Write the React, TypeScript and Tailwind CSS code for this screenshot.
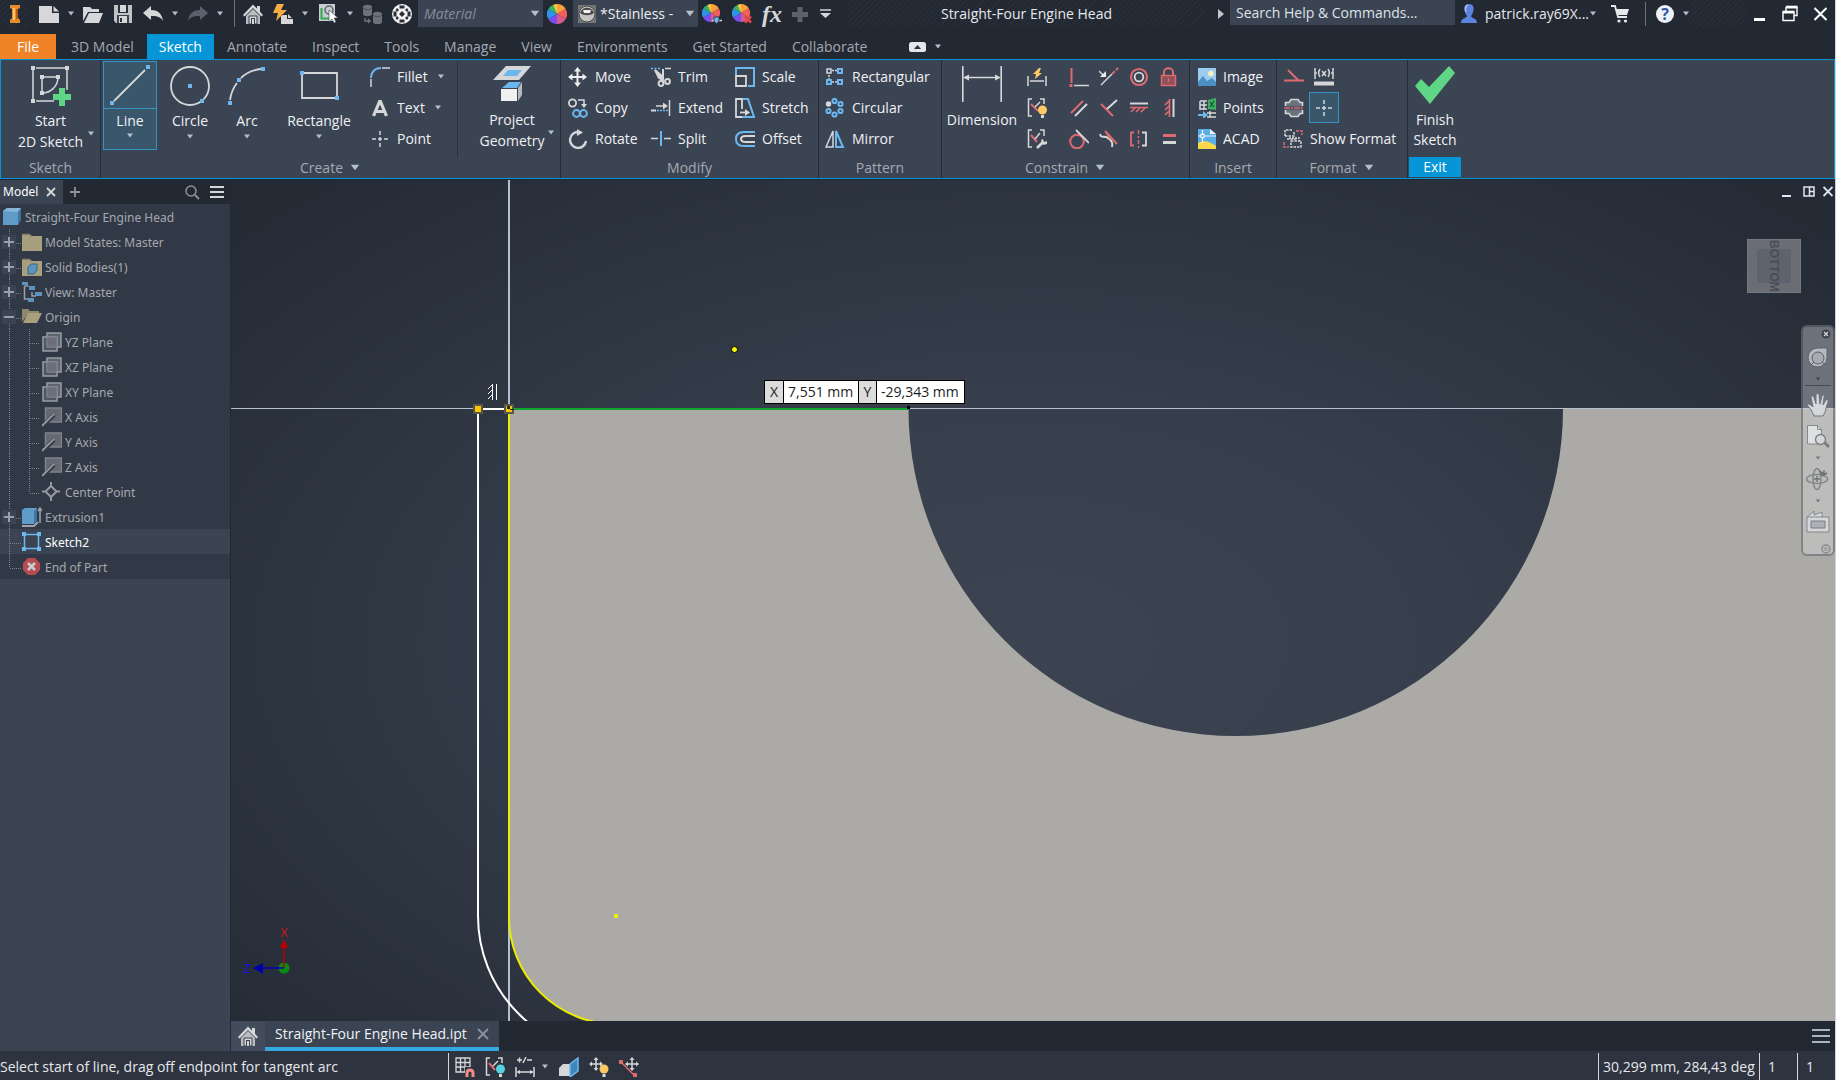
import React from 'react';

const L = '#d6d7d9';
const B = '#6cb8ee';
const R = '#de6a70';
const Y = '#fdc966';
const G = '#5fd685';

interface SvgProps {
  w?: number;
  h?: number;
  children: React.ReactNode;
}

const Svg: React.FC<SvgProps> = ({ w = 20, h = 20, children }) => (
  <svg width={w} height={h} viewBox={`0 0 ${w} ${h}`} fill="none" stroke={L} strokeWidth={1.5} className="shrink-0" aria-hidden="true">
    {children}
  </svg>
);

const Caret = ({ color = '#b4bfcc', w = 8 }: { color?: string; w?: number }) => (
  <svg width={w} height={w / 2 + 1} viewBox="0 0 8 5" className="shrink-0" aria-hidden="true">
    <path d="M1 0.5h6L4 4.5z" fill={color} />
  </svg>
);

const CaretButton = ({ label }: { label: string }) => (
  <button aria-label={label} className="ml-2 flex h-5 w-2 items-center justify-center">
    <Caret />
  </button>
);

/* ---------- title bar icons ---------- */

const InventorLogo = () => (
  <Svg w={12} h={20}>
    <path d="M1 1h10v3l-2 1v9l2 2v3H1v-3l2-2V5L1 4z" fill="#e98b2a" stroke="none" />
    <path d="M4 4h2v12H4z" fill="#f7c271" stroke="none" />
    <path d="M7 5h2v9l-2 2z" fill="#b05d10" stroke="none" />
  </Svg>
);

const NewIcon = () => (
  <Svg>
    <path d="M0 2h13v7h7v10H0z" fill={L} stroke="none" />
    <path d="M14.500 2L20 7.500h-5.500z" fill={L} stroke="none" />
  </Svg>
);

const OpenIcon = () => (
  <Svg>
    <path d="M0 17V3h7l2 2h7v3H5z" fill={L} stroke="none" />
    <path d="M6 9h14l-4 10H1z" fill={L} stroke="none" />
  </Svg>
);

const SaveIcon = () => (
  <Svg>
    <path d="M1 1h18v18H3l-2-2z" fill="#bfc2c6" stroke="none" />
    <path d="M5 1h10v8H5z" fill="#2a313c" stroke="none" />
    <path d="M7 1h6v7H7z" fill={L} stroke="none" />
    <path d="M4 11h12v8H4z" fill="#3d444f" stroke="none" />
    <path d="M6 12h8v7H6z" fill={L} stroke="none" />
    <path d="M7 14h2v4H7z" fill="#2a313c" stroke="none" />
  </Svg>
);

const UndoIcon = () => (
  <Svg>
    <path d="M0 9l8-7v4c6 0 11 3 12 11-3-5-7-5-12-5v4z" fill={L} stroke="none" />
  </Svg>
);

const RedoIcon = () => (
  <Svg>
    <path d="M20 9l-8-7v4C6 6 1 9 0 17c3-5 7-5 12-5v4z" fill="#5a616c" stroke="none" />
  </Svg>
);

const HomeIcon = () => (
  <Svg>
    <path d="M14 2h3v6h-3zM10 0.500L20 11l-1.500 1.500L10 4l-8.500 8.500L0 11z" fill={L} stroke="none" />
    <path d="M3 12l7-7 7 7v8H3z" fill="#b9bcc0" stroke="none" />
    <path d="M6 12h8v8H6z" fill={L} stroke="#39404c" strokeWidth={1} />
    <path d="M8 14h4v6H8z" fill="#39404c" stroke="none" />
    <path d="M9 15h2v5H9z" fill={L} stroke="none" />
  </Svg>
);

const BoltDocIcon = () => (
  <Svg>
    <path d="M4 0h7L8 6h6L3 17l2-8H0z" fill="#f8ac45" stroke="none" />
    <path d="M8 12l2-1h4v4h6v5H8z" fill={L} stroke="none" />
    <path d="M15 10l4 4h-4z" fill={L} stroke="none" />
  </Svg>
);

const PickIcon = () => (
  <Svg>
    <path d="M1 0h16v17H1z" fill="#c9ccd0" stroke="none" />
    <path d="M3.500 4v10.500h9" stroke="#2fa84f" strokeWidth={2} />
    <circle cx="11" cy="6" r="4" stroke="#5d646e" />
    <path d="M11 6l9 8h-4l2 4-2 1-2-4-3 3z" fill="#fff" stroke="#39404c" strokeWidth={0.6} />
  </Svg>
);

const CylindersIcon = () => (
  <Svg>
    <path d="M1 3c0-3 9-3 9 0v7c0 3-9 3-9 0z" fill="#6c727c" stroke="none" />
    <path d="M11 10c0-3 9-3 9 0v8c0 3-9 3-9 0z" fill="#6c727c" stroke="none" />
    <path d="M1 4c1 2 8 2 9 0M11 11c1 2 8 2 9 0" stroke="#4a515c" strokeWidth={1} />
    <path d="M3 14v3h5M6 15l2 2-2 2" stroke="#6c727c" />
  </Svg>
);

const BallIcon = () => (
  <Svg>
    <circle cx="10" cy="10" r="10" fill="#f3f3f3" stroke="none" />
    <g fill="#2a2f38" stroke="none">
      <path d="M7.500 1.500h5v3h-5zM7.500 15.500h5v3h-5zM1.500 7.500h3v5h-3zM15.500 7.500h3v5h-3z" />
      <path d="M10 7l3 3-3 3-3-3zM5 4l2 2-2 2-1.500-2zM15 4l-2 2 2 2 1.500-2zM5 16l2-2-2-2-1.500 2zM15 16l-2-2 2-2 1.500 2z" />
    </g>
  </Svg>
);

const wheelSlices = [
  ['M10 10V0A10 10 0 0 1 18.700 5z', '#f9a13a'],
  ['M10 10L18.700 5A10 10 0 0 1 18.700 15z', '#f2605b'],
  ['M10 10L18.700 15A10 10 0 0 1 10 20z', '#d65a8c'],
  ['M10 10V20A10 10 0 0 1 1.300 15z', '#7b4df0'],
  ['M10 10L1.300 15A10 10 0 0 1 1.300 5z', '#2d95e8'],
  ['M10 10L1.300 5A10 10 0 0 1 6 1z', '#35b56c'],
  ['M10 10L6 1A10 10 0 0 1 10 0z', '#f3cb3f'],
];

const WheelIcon = ({ mark }: { mark?: 'adjust' | 'clear' }) => (
  <Svg>
    <g stroke="none" transform={mark ? 'scale(0.9)' : undefined}>
      {wheelSlices.map(([d, fill]) => (
        <path key={d} d={d} fill={fill} />
      ))}
    </g>
    {mark === 'adjust' && (
      <>
        <path d="M10 16.500h10" />
        <path d="M12 13h5v4l-2.500 3-2.500-3z" fill={B} stroke="#222933" strokeWidth={0.800} />
      </>
    )}
    {mark === 'clear' && <path d="M13 12.500l6 6M19 12.500l-6 6" stroke="#e0474b" strokeWidth={2.600} />}
  </Svg>
);

const SteelBallIcon = () => (
  <Svg w={18} h={18}>
    <path d="M0 0h18v18H0z" fill="#757575" stroke="none" />
    <circle cx="9" cy="9" r="8" fill="#c4c4c4" stroke="#4a4a4a" strokeWidth={1} />
    <path d="M2 8c2-7 12-7 14 0-4 3-10 3-14 0z" fill="#4b4b4b" stroke="none" />
    <path d="M5 5h8l-1 3H6z" fill="#f2f2f2" stroke="none" />
  </Svg>
);

const UserIcon = () => (
  <Svg w={18} h={20}>
    <path d="M9 0c4 0 5 3 4.500 6S12 11 11 12c0 2 6 2 6 7H1c0-5 6-5 6-7-1-1-2-3-2.500-6S5 0 9 0z" fill="#5c83dd" stroke="none" />
    <path d="M8 1c-3 1-3 4-2 7" stroke="#a9c0f7" />
  </Svg>
);

const CartIcon = () => (
  <Svg w={18}>
    <path d="M0 2h4l3 11h9" stroke="#e6e8ec" strokeWidth={1.800} />
    <path d="M5 5h13l-2 6H6.500z" fill="#e6e8ec" stroke="none" />
    <circle cx="8" cy="17" r="1.600" fill="#e6e8ec" stroke="none" />
    <circle cx="14.500" cy="17" r="1.600" fill="#e6e8ec" stroke="none" />
  </Svg>
);

/* ---------- ribbon icons ---------- */

const Dot = ({ x, y, c = B }: { x: number; y: number; c?: string }) => (
  <rect x={x - 2} y={y - 2} width={4} height={4} fill={c} stroke="none" />
);

const StartSketchIcon = () => (
  <Svg w={40} h={42}>
    <path d="M5 3h26M36 5v20M2 8v26M5 36h18M2 3v33M31 3h5v4" strokeWidth={1.500} />
    <path d="M11 12h16M11 12v16M27 12c0 9-7 16-16 16" />
    <Dot x={2} y={3} c={L} />
    <Dot x={36} y={3} c={L} />
    <Dot x={2} y={36} c={L} />
    <Dot x={11} y={12} c={L} />
    <Dot x={27} y={12} c={L} />
    <Dot x={11} y={28} c={L} />
    <path d="M28 23h6v6h6v6h-6v6h-6v-6h-6v-6h6z" fill={G} stroke="none" />
  </Svg>
);

const LineIcon = () => (
  <Svg w={40} h={40}>
    <path d="M4 36L35 5" strokeWidth={1.800} />
    <Dot x={2} y={38} />
    <Dot x={38} y={2} />
  </Svg>
);

const CircleIcon = () => (
  <Svg w={40} h={40}>
    <circle cx="20" cy="20" r="19" strokeWidth={1.800} />
    <Dot x={20} y={20} />
    <Dot x={32} y={35} />
  </Svg>
);

const ArcIcon = () => (
  <Svg w={40} h={40}>
    <path d="M3 34C4 27 6 22 10 17M14 12C19 7 26 4 34 3" strokeWidth={1.800} />
    <Dot x={3} y={37} />
    <Dot x={12} y={14} />
    <Dot x={36} y={3} />
  </Svg>
);

const RectIcon = () => (
  <Svg w={40} h={40}>
    <path d="M3 7h35v25H3z" strokeWidth={1.800} />
    <Dot x={3} y={7} />
    <Dot x={38} y={32} />
  </Svg>
);

const FilletIcon = () => (
  <Svg>
    <path d="M1 11C1 5 5 1 11 1" stroke={B} strokeWidth={1.800} />
    <path d="M12 1h8M1 12v8" />
  </Svg>
);

const TextIcon = () => (
  <Svg>
    <path d="M10 2.500L3.500 18M10 2.500L16.500 18M5.500 13.500h9" strokeWidth={3.200} />
  </Svg>
);

const PointIcon = () => (
  <Svg>
    <path d="M10 2v4M10 14v4M2 10h4M14 10h4M8 10h4M10 8v4" />
  </Svg>
);

const ProjectIcon = () => (
  <Svg w={38} h={36}>
    <path d="M13 0h25L26 14H0z" fill={L} stroke="none" />
    <path d="M15 4h14l-5 6H10z" fill={B} stroke="none" />
    <path d="M9 22l7-6h12l-4 6z" fill={B} stroke="none" />
    <path d="M8 23h16v12H8z" fill="#f0f0f0" stroke="none" />
    <path d="M25 22l4-6v13l-4 6z" fill="#b5b8bd" stroke="none" />
  </Svg>
);

const MoveIcon = () => (
  <Svg>
    <path d="M9.500 3v14M3 10h13" strokeWidth={2} stroke="#eee" />
    <path d="M9.500 0l3.500 4.500H6zM9.500 20L13 15.500H6zM0 10l4.500-3.500v7zM19 10l-4.500-3.500v7z" fill="#eee" stroke="none" />
  </Svg>
);

const CopyIcon = () => (
  <Svg>
    <circle cx="4.500" cy="5" r="3.600" strokeWidth={1.800} />
    <path d="M10 2h6v5" />
    <path d="M13 6h6l-3 4z" fill={L} stroke="none" />
    <circle cx="8.500" cy="15.500" r="3.400" stroke={B} strokeWidth={2} />
    <circle cx="15.500" cy="15.500" r="3.400" stroke={B} strokeWidth={2} />
  </Svg>
);

const RotateIcon = () => (
  <Svg>
    <path d="M11 3a8 8 0 1 0 7 9" strokeWidth={2.400} />
    <path d="M9 0l6 3.500L9 7z" fill={L} stroke="none" />
  </Svg>
);

const TrimIcon = () => (
  <Svg>
    <path d="M0 1.500h9" stroke={B} strokeDasharray="2 1.500" />
    <path d="M14 1.500h6" />
    <path d="M4 3l4 8 4 2-1-4zM12 2v10" fill={L} strokeWidth={2} />
    <circle cx="10" cy="16.500" r="2.400" strokeWidth={2} />
    <circle cx="16.500" cy="14.500" r="2.400" strokeWidth={2} />
  </Svg>
);

const ExtendIcon = () => (
  <Svg>
    <path d="M18.500 2v16M5 8h9" />
    <path d="M12 4.500L17 8l-5 3.500z" fill={L} stroke="none" />
    <path d="M0 12.500h5" strokeWidth={2} />
    <path d="M6 12.500h12" stroke={B} strokeDasharray="2 1" />
  </Svg>
);

const SplitIcon = () => (
  <Svg>
    <path d="M0 9.500h7M13 9.500h7" />
    <path d="M10 2v15" stroke={B} strokeWidth={2} />
  </Svg>
);

const ScaleIcon = () => (
  <Svg>
    <path d="M1 8V1h18v18h-6" stroke={B} strokeWidth={2} />
    <path d="M1 9h10v10H1z" strokeWidth={1.800} />
  </Svg>
);

const StretchIcon = () => (
  <Svg>
    <path d="M7 19H1V1h6v10" strokeWidth={1.800} />
    <path d="M8 1h5l6 18H7" stroke={B} strokeWidth={2} />
    <path d="M5 14.500h6" strokeWidth={1.800} />
    <path d="M10 11l5 3.500-5 3.500z" fill={L} stroke="none" />
  </Svg>
);

const OffsetIcon = () => (
  <Svg>
    <path d="M20 3H9C3 3 1 6 1 10s2 7 8 7h11" stroke={B} strokeWidth={2} />
    <path d="M20 7h-9c-4 0-5 1-5 3s1 3 5 3h9" strokeWidth={2} />
  </Svg>
);

const RectPatternIcon = () => (
  <Svg>
    <path d="M7 3.500h5M4 8v5M7 15h5" strokeDasharray="2 1" />
    <path d="M2 2h4v4H2z" />
    <path d="M13 2h4v4h-4zM2 13h4v4H2zM13 13h4v4h-4z" stroke={B} strokeWidth={2} />
  </Svg>
);

const CircPatternIcon = () => (
  <Svg>
    <circle cx="3.500" cy="6" r="2" fill={L} />
    {[[9.500, 3], [15.500, 6], [15.500, 13], [9.500, 16.500], [3.500, 13]].map(([x, y]) => (
      <circle key={`${x}-${y}`} cx={x} cy={y} r="2.100" stroke={B} strokeWidth={2} />
    ))}
  </Svg>
);

const MirrorIcon = () => (
  <Svg>
    <path d="M8 2v16H1z" />
    <path d="M11 2v16h7z" stroke={B} strokeWidth={2} />
  </Svg>
);

const DimensionIcon = () => (
  <Svg w={40} h={36}>
    <path d="M0.800 0v36M39.200 0v36M4 11.500h32" strokeWidth={1.600} />
    <path d="M1 11.500l6-3v6zM39 11.500l-6-3v6z" fill={L} stroke="none" />
  </Svg>
);

const AutoDimIcon = () => (
  <Svg>
    <path d="M1 9v10M19 9v10M3 14h14" />
    <path d="M12 1L6 7h3l-1 5 7-6h-3l2-5z" fill={Y} stroke="none" />
  </Svg>
);

const ShowConstraintsIcon = () => (
  <Svg>
    <path d="M5 1H1.500v17H5M13 1h4v5" />
    <path d="M4 6l7 7" stroke={R} strokeWidth={2} />
    <path d="M8 9l5-5" />
    <circle cx="15.500" cy="12" r="4.500" fill={Y} stroke="none" />
    <path d="M14 17h3v3h-3z" fill={L} stroke="none" />
  </Svg>
);

const ConstraintSettingsIcon = () => (
  <Svg>
    <path d="M5 1H1.500v17H5M13 1h4v6" />
    <path d="M4 6l6 7" stroke={R} strokeWidth={2} />
    <path d="M8 10l5-6" />
    <path d="M10 19l6-6" strokeWidth={2.600} />
    <path d="M14 11l2-1 1 3 3-1v3l-4 1z" fill={L} stroke="none" />
  </Svg>
);

const CoincidentIcon = () => (
  <Svg>
    <path d="M2.500 1v15" stroke={R} strokeWidth={2} />
    <path d="M5 18.500h15" />
    <rect x="0.500" y="17" width="3" height="3" fill={R} stroke="none" />
  </Svg>
);

const CollinearIcon = () => (
  <Svg>
    <path d="M2 18L13 7" />
    <path d="M13 7l6-6" stroke={R} strokeWidth={2} strokeDasharray="4 1.500" />
    <path d="M0 4l4 4" />
    <path d="M1 10h6V4z" fill="#eee" stroke="none" />
  </Svg>
);

const ConcentricIcon = () => (
  <Svg>
    <circle cx="10" cy="10" r="8" stroke={R} strokeWidth={2.200} />
    <circle cx="10" cy="10" r="4.300" strokeWidth={1.800} />
  </Svg>
);

const LockIcon = () => (
  <Svg>
    <path d="M5 8V5c0-5 9-5 9 0v3" stroke={R} strokeWidth={2} />
    <path d="M2.500 8.500h14v10h-14z" fill="#8f525c" stroke={R} />
    <path d="M9.500 11v4" stroke={R} />
  </Svg>
);

const ParallelIcon = () => (
  <Svg>
    <path d="M2 15L14 3" stroke={R} strokeWidth={2} />
    <path d="M6 18L18 6" strokeWidth={2} />
  </Svg>
);

const PerpendicularIcon = () => (
  <Svg>
    <path d="M2 6l12 12" stroke={R} strokeWidth={2} />
    <path d="M8 11L18 2" strokeWidth={2} />
  </Svg>
);

const HorizontalIcon = () => (
  <Svg>
    <path d="M1 5.500h18" strokeWidth={2} />
    <path d="M1 9.500h18M6 10l-4 4M11 10l-4 4M16 10l-4 4" stroke={R} strokeWidth={1.700} />
  </Svg>
);

const VerticalIcon = () => (
  <Svg>
    <path d="M14.500 1v18" strokeWidth={2} />
    <path d="M10.500 1v18M10 3l-4 4M10 8l-4 4M10 13l-4 4" stroke={R} strokeWidth={1.700} />
  </Svg>
);

const TangentIcon = () => (
  <Svg>
    <circle cx="8" cy="12.500" r="6.800" stroke={R} strokeWidth={2} />
    <path d="M7 1l13 13" strokeWidth={1.800} />
  </Svg>
);

const SmoothIcon = () => (
  <Svg>
    <path d="M6 2l12 13" stroke={R} strokeWidth={2} />
    <path d="M1 5c1 5 4 1 8 4s5 5 4 9" strokeWidth={2} />
    <path d="M8 5l4 5" stroke={R} strokeWidth={2} />
  </Svg>
);

const SymmetricIcon = () => (
  <Svg>
    <path d="M5 3.500H2v13h3" stroke={R} strokeWidth={1.800} />
    <path d="M9.500 1v18" stroke={R} strokeDasharray="4 2 2 2" />
    <path d="M13 3.500h4v13h-4" strokeWidth={1.800} />
  </Svg>
);

const EqualIcon = () => (
  <Svg>
    <path d="M4 6.500h13" stroke={R} strokeWidth={3} />
    <path d="M4 13.500h13" strokeWidth={3} />
  </Svg>
);

const ImageIcon = () => (
  <Svg w={18}>
    <path d="M0 1h18v18H0z" fill="#9ccdf0" stroke="none" />
    <circle cx="13" cy="6.500" r="2.800" fill="#fdf0c0" stroke="none" />
    <path d="M0 15l5-6 4 5 5-3 4 4v4H0z" fill="#4a90c4" stroke="none" />
  </Svg>
);

const PointsIcon = () => (
  <Svg w={18}>
    <path d="M2 3h7M2 7h7M2 11h7M2 3v9M6 3v9M9 15h9M9 19h9M12 13v6" />
    <path d="M10 2l8-2v12l-8-1z" fill="#3fae66" stroke="none" />
    <path d="M12 4l4 5M16 3l-4 6" stroke="#14532d" strokeWidth={1.200} />
    <path d="M0 16h5v-3l5 4-5 4v-3H0z" fill={B} stroke="none" />
  </Svg>
);

const AcadIcon = () => (
  <Svg w={18}>
    <path d="M0 0h12l6 5v15H0z" fill="#5aaee8" stroke="none" />
    <path d="M0 14c6-3 11-2 18 3v3H0z" fill="#fbd84b" stroke="none" />
    <path d="M12 0v5h6z" fill="#f0f0f0" stroke="none" />
    <path d="M4.500 1v13M0 7h18" stroke="#e8f4fc" strokeWidth={1.200} />
    <circle cx="4.500" cy="7" r="1.800" fill="#5aaee8" stroke="#fff" strokeWidth={1.200} />
  </Svg>
);

const ConstructionIcon = () => (
  <Svg>
    <path d="M0 13.500h20M4 3l10 10" stroke={R} strokeWidth={2} />
  </Svg>
);

const DrivenDimIcon = () => (
  <Svg>
    <path d="M1 1v11M19 1v11M1 6h2M17 6h2M6 2c-2 3-2 5 0 8M14 2c2 3 2 5 0 8M8 4l4 5M12 4L8 9" />
    <path d="M0 16.500h20" strokeWidth={4} />
  </Svg>
);

const CenterlineIcon = () => (
  <Svg>
    <path d="M1.500 8.500v-4h3.500l2-3h7l2 3h2.500v4zM1.500 11.500v4h3.500l2 3h7l2-3h2.500v-4z" fill="#6b727d" stroke="none" />
    <path d="M1.500 8V4.500H5l2-3h7l2 3h2.500V8M1.500 12v3.500H5l2 3h7l2-3h2.500V12" strokeWidth={1.600} />
    <path d="M0 10h20" stroke={R} strokeDasharray="6 1 2 1" />
  </Svg>
);

const ShowFormatIcon = () => (
  <Svg>
    <path d="M2 7V1h8M2 7h9v-5M8 12h10v6H8zM4 10h10" strokeDasharray="2.500 1" />
    <path d="M13 2h6v4M1 13v5h5" stroke={R} strokeDasharray="3 1" />
    <path d="M6 9h10v3" strokeDasharray="2 1" />
  </Svg>
);

const CheckIcon = () => (
  <Svg w={40} h={40}>
    <path d="M0 20l6-7 8 8L34 0l6 7-25 31z" fill={G} stroke="none" />
  </Svg>
);

/* ---------- ribbon building blocks ---------- */

const Panel = ({ title, caret, className, children }: { title: string; caret?: boolean; className: string; children: React.ReactNode }) => (
  <section aria-label={title} className={`flex flex-col border-r border-[#252c37] ${className}`}>
    <div className="flex flex-1 pt-px">{children}</div>
    <div className="flex h-5 items-center justify-center gap-1.5 pb-px text-[#a5a9b0]">
      <span>{title}</span>
      {caret && <Caret w={12} />}
    </div>
  </section>
);

const BigTool = ({ icon, label, className }: { icon: React.ReactNode; label: string; className: string }) => (
  <button className={`flex flex-col items-center text-[#f0f1f3] ${className}`}>
    <span className="flex h-[50px] items-center">{icon}</span>
    <span className="leading-5">{label}</span>
    <span className="flex h-2.5 items-center">
      <Caret />
    </span>
  </button>
);

const SmallTool = ({ icon, label, caret }: { icon: React.ReactNode; label: string; caret?: boolean }) => (
  <button className="flex h-[31px] items-center gap-[7px] whitespace-nowrap text-[#f0f1f3]">
    {icon}
    <span>{label}</span>
    {caret && (
      <span className="ml-0.5">
        <Caret />
      </span>
    )}
  </button>
);

const IconTool = ({ icon, label, selected }: { icon: React.ReactNode; label: string; selected?: boolean }) => (
  <button
    aria-label={label}
    className={`flex h-[31px] w-[30px] items-center justify-center ${selected ? 'border border-[#3593c4] bg-[#3a566b]' : ''}`}
  >
    {icon}
  </button>
);

const modifyTools: [string, React.ReactNode][] = [
  ['Move', <MoveIcon />],
  ['Trim', <TrimIcon />],
  ['Scale', <ScaleIcon />],
  ['Copy', <CopyIcon />],
  ['Extend', <ExtendIcon />],
  ['Stretch', <StretchIcon />],
  ['Rotate', <RotateIcon />],
  ['Split', <SplitIcon />],
  ['Offset', <OffsetIcon />],
];

const constraintTools: [string, React.ReactNode][] = [
  ['Coincident', <CoincidentIcon />],
  ['Collinear', <CollinearIcon />],
  ['Concentric', <ConcentricIcon />],
  ['Fix', <LockIcon />],
  ['Parallel', <ParallelIcon />],
  ['Perpendicular', <PerpendicularIcon />],
  ['Horizontal', <HorizontalIcon />],
  ['Vertical', <VerticalIcon />],
  ['Tangent', <TangentIcon />],
  ['Smooth', <SmoothIcon />],
  ['Symmetric', <SymmetricIcon />],
  ['Equal', <EqualIcon />],
];

const Ribbon = () => (
  <div className="flex h-[120px] border border-[#0696d7] bg-[#3b4453] text-sm">
    <Panel title="Sketch" className="w-[100px]">
      <button className="flex flex-1 flex-col items-center pt-1 text-[#f0f1f3]">
        <StartSketchIcon />
        <span className="mt-1 leading-5">Start</span>
        <span className="flex items-center gap-1 pl-3 leading-5">
          2D Sketch
          <span className="mb-4">
            <Caret />
          </span>
        </span>
      </button>
    </Panel>

    <Panel title="Create" caret className="w-[460px]">
      <div className="flex items-start">
        <button className="ml-0.5 flex w-[54px] flex-col items-center border border-[#3593c4] bg-[#3a566b] text-[#f0f1f3]">
          <span className="flex h-[47px] w-full items-center justify-center border-b border-[#3593c4]">
            <LineIcon />
          </span>
          <span className="mt-0.5 leading-5">Line</span>
          <span className="flex h-[18px] items-start pt-0.5">
            <Caret />
          </span>
        </button>
        <BigTool icon={<CircleIcon />} label="Circle" className="w-[66px]" />
        <BigTool icon={<ArcIcon />} label="Arc" className="w-12" />
        <BigTool icon={<RectIcon />} label="Rectangle" className="w-24" />
      </div>
      <div className="flex w-[91px] flex-col border-r border-[#2c3440] pl-[3px]">
        <SmallTool icon={<FilletIcon />} label="Fillet" caret />
        <SmallTool icon={<TextIcon />} label="Text" caret />
        <SmallTool icon={<PointIcon />} label="Point" />
      </div>
      <button className="flex flex-1 flex-col items-center pl-1.5 pt-[5px] text-[#f0f1f3]">
        <ProjectIcon />
        <span className="mt-2 leading-5">Project</span>
        <span className="flex items-center gap-0.5 pl-2.5 leading-5">
          Geometry
          <span className="mb-4">
            <Caret />
          </span>
        </span>
      </button>
    </Panel>

    <Panel title="Modify" className="w-[258px]">
      <div className="grid grid-cols-[83px_84px_80px] content-start pl-[7px]">
        {modifyTools.map(([label, icon]) => (
          <SmallTool key={label} icon={icon} label={label} />
        ))}
      </div>
    </Panel>

    <Panel title="Pattern" className="w-[123px]">
      <div className="flex flex-col pl-1.5">
        <SmallTool icon={<RectPatternIcon />} label="Rectangular" />
        <SmallTool icon={<CircPatternIcon />} label="Circular" />
        <SmallTool icon={<MirrorIcon />} label="Mirror" />
      </div>
    </Panel>

    <Panel title="Constrain" caret className="w-[248px]">
      <button className="flex w-20 flex-col items-center pt-[5px] text-[#f0f1f3]">
        <DimensionIcon />
        <span className="mt-2 leading-5">Dimension</span>
      </button>
      <div className="flex flex-col">
        <IconTool icon={<AutoDimIcon />} label="Automatic Dimensions" />
        <IconTool icon={<ShowConstraintsIcon />} label="Show Constraints" />
        <IconTool icon={<ConstraintSettingsIcon />} label="Constraint Settings" />
      </div>
      <div className="ml-3 grid grid-cols-4 content-start">
        {constraintTools.map(([label, icon]) => (
          <IconTool key={label} icon={icon} label={label} />
        ))}
      </div>
    </Panel>

    <Panel title="Insert" className="w-[87px]">
      <div className="flex flex-col pl-2">
        <SmallTool icon={<ImageIcon />} label="Image" />
        <SmallTool icon={<PointsIcon />} label="Points" />
        <SmallTool icon={<AcadIcon />} label="ACAD" />
      </div>
    </Panel>

    <Panel title="Format" caret className="w-[131px]">
      <div className="flex flex-col pl-0.5">
        <div className="flex">
          <IconTool icon={<ConstructionIcon />} label="Construction" />
          <IconTool icon={<DrivenDimIcon />} label="Driven Dimension" />
        </div>
        <div className="flex">
          <IconTool icon={<CenterlineIcon />} label="Centerline" />
          <IconTool icon={<PointIcon />} label="Center Point" selected />
        </div>
        <div className="pl-1">
          <SmallTool icon={<ShowFormatIcon />} label="Show Format" />
        </div>
      </div>
    </Panel>

    <div className="flex w-[54px] flex-col">
      <button className="flex flex-1 flex-col items-center pt-1.5 text-[#f0f1f3]">
        <CheckIcon />
        <span className="mt-1 leading-5">Finish</span>
        <span className="leading-5">Sketch</span>
      </button>
      <button className="mx-px mb-px h-5 bg-[#0696d7] leading-5 text-white">Exit</button>
    </div>
  </div>
);

/* ---------- top bars ---------- */

const ribbonTabs = ['3D Model', 'Sketch', 'Annotate', 'Inspect', 'Tools', 'Manage', 'View', 'Environments', 'Get Started', 'Collaborate'];

const hatch = 'bg-[repeating-linear-gradient(135deg,#282f39_0px,#282f39_1px,#222933_1px,#222933_4px)]';

const TitleButton = ({ label, className, children }: { label: string; className: string; children: React.ReactNode }) => (
  <button aria-label={label} className={`flex h-5 items-center ${className}`}>
    {children}
  </button>
);

const TitleBar = () => (
  <header className="flex h-[34px] items-start bg-[#222933] text-sm text-[#e6e8eb]">
    <div className="flex h-[27px] items-center">
      <div className={`flex h-7 w-7 items-center justify-center pl-0.5 ${hatch}`}>
        <InventorLogo />
      </div>
      <TitleButton label="New" className="ml-[11px]"><NewIcon /></TitleButton>
      <CaretButton label="New options" />
      <TitleButton label="Open" className="ml-2"><OpenIcon /></TitleButton>
      <TitleButton label="Save" className="ml-2.5"><SaveIcon /></TitleButton>
      <TitleButton label="Undo" className="ml-2.5"><UndoIcon /></TitleButton>
      <CaretButton label="Undo options" />
      <TitleButton label="Redo" className="ml-[9px]"><RedoIcon /></TitleButton>
      <CaretButton label="Redo options" />
      <div className="ml-2.5 h-[27px] w-px bg-[#6d737c]" />
      <TitleButton label="Home" className="ml-2"><HomeIcon /></TitleButton>
      <TitleButton label="Update" className="ml-2.5"><BoltDocIcon /></TitleButton>
      <CaretButton label="Update options" />
      <TitleButton label="Select" className="ml-[9px]"><PickIcon /></TitleButton>
      <CaretButton label="Select options" />
      <TitleButton label="Team" className="ml-2"><CylindersIcon /></TitleButton>
      <TitleButton label="Material browser" className="ml-2.5"><BallIcon /></TitleButton>
      <div className="relative ml-1.5 flex h-[27px] w-[125px] items-center bg-[#3b4453]">
        <select aria-label="Material" className="h-full w-full appearance-none bg-transparent pl-1.5 italic text-[#868c96]">
          <option>Material</option>
        </select>
        <span className="pointer-events-none absolute right-0.5">
          <Caret w={12} />
        </span>
      </div>
      <TitleButton label="Appearance browser" className="ml-1"><WheelIcon /></TitleButton>
      <div className="relative ml-1.5 flex h-[27px] w-[125px] items-center bg-[#3b4453] pl-[5px]">
        <SteelBallIcon />
        <select aria-label="Appearance" className="h-full min-w-0 flex-1 appearance-none bg-transparent pl-1 text-[#eceef0]">
          <option>*Stainless -</option>
        </select>
        <span className="pointer-events-none absolute right-0.5">
          <Caret w={12} />
        </span>
      </div>
      <TitleButton label="Adjust" className="ml-1"><WheelIcon mark="adjust" /></TitleButton>
      <TitleButton label="Clear" className="ml-2.5"><WheelIcon mark="clear" /></TitleButton>
      <button aria-label="Parameters" className="ml-2.5 w-5 font-['Liberation_Serif',serif] text-2xl font-bold italic leading-5 text-[#d6d7d9]">fx</button>
      <TitleButton label="Add" className="ml-2.5">
        <Svg w={16}>
          <path d="M8 3v15M0 10.500h16" stroke="#5c626c" strokeWidth={5} />
        </Svg>
      </TitleButton>
      <TitleButton label="Customize" className="ml-3">
        <Svg w={11}>
          <path d="M0 6h11" />
          <path d="M0 9h11l-5.500 5z" fill={L} stroke="none" />
        </Svg>
      </TitleButton>
    </div>
    <div className={`ml-4 mr-3 flex h-7 flex-1 items-center justify-center ${hatch}`}>
      <h1>Straight-Four Engine Head</h1>
    </div>
    <div className="flex h-[27px] items-center">
      <svg width="6" height="10" aria-hidden="true"><path d="M0 0l6 5-6 5z" fill="#c3c8cf" /></svg>
      <input
        aria-label="Search help and commands"
        placeholder="Search Help & Commands..."
        className="ml-1.5 h-[25px] w-[225px] self-start bg-[#3b4453] pl-1.5 text-sm placeholder:text-[#dfe2e6]"
      />
      <button className="ml-[5px] flex items-center">
        <UserIcon />
        <span className="ml-[7px]">patrick.ray69X...</span>
        <Caret />
      </button>
      <TitleButton label="Store" className="ml-3.5"><CartIcon /></TitleButton>
      <div className="ml-4 h-6 w-px bg-[#6d737c]" />
      <TitleButton label="Help" className="ml-2.5">
        <span className="flex h-[18px] w-[18px] items-center justify-center rounded-full bg-[#eef1f6] text-base font-bold leading-4 text-[#3457a5]">?</span>
      </TitleButton>
      <CaretButton label="Help options" />
      <div className={`h-7 w-14 ${hatch}`} />
      <TitleButton label="Minimize" className="ml-2">
        <Svg w={12}><path d="M0 15.500h11" stroke="#fff" strokeWidth={3} /></Svg>
      </TitleButton>
      <TitleButton label="Restore" className="ml-4">
        <Svg w={16}>
          <path d="M4 7V3.500h11v8h-3" stroke="#fff" strokeWidth={1.400} />
          <path d="M4 3h11.500" stroke="#fff" strokeWidth={2.600} />
          <path d="M1 8.500h11v8H1z" stroke="#fff" strokeWidth={1.400} />
          <path d="M0.500 8h12" stroke="#fff" strokeWidth={2.600} />
        </Svg>
      </TitleButton>
      <TitleButton label="Close" className="ml-4 mr-2">
        <Svg w={13}><path d="M0.500 4l12 12M12.500 4l-12 12" stroke="#fff" strokeWidth={2} /></Svg>
      </TitleButton>
    </div>
  </header>
);

const TabRow = () => (
  <nav className="flex h-[25px] bg-[#222933] text-sm">
    <button className="w-14 bg-[#f08327] text-white">File</button>
    <div className="ml-[3px] flex gap-px">
      {ribbonTabs.map((tab) => (
        <button key={tab} className={`px-3 ${tab === 'Sketch' ? 'bg-[#0696d7] text-white' : 'text-[#a3a8b0]'}`}>
          {tab}
        </button>
      ))}
    </div>
    <button aria-label="Minimize ribbon" className="ml-[30px] flex items-center">
      <Svg w={17} h={10}>
        <rect width="17" height="10" rx="2.500" fill="#e4e6e9" stroke="none" />
        <path d="M5 7h7L8.500 3z" fill="#2b323d" stroke="none" />
      </Svg>
    </button>
    <div className="flex items-center">
      <CaretButton label="Ribbon options" />
    </div>
  </nav>
);

/* ---------- model browser ---------- */

const FolderIcon = ({ body }: { body?: boolean }) => (
  <Svg>
    <path d="M0 2h7l3 2h10v15H0z" fill="#a8a07d" stroke="none" />
    <path d="M0 2.500h7l3 2" stroke="#8a8369" />
    {body && <path d="M6 10l3-3h6v6l-3 4H6z" fill="#5c93bf" stroke="#38678c" strokeWidth={1} />}
  </Svg>
);

const OpenFolderIcon = () => (
  <Svg>
    <path d="M0 15V2h6l2 2h9v3H6z" fill="#8f8869" stroke="none" />
    <path d="M6 6h14l-5 10H1z" fill="#a8a07d" stroke="none" />
  </Svg>
);

const ViewTreeIcon = () => (
  <Svg>
    <path d="M2.500 4v13h4M2.500 4h4M10 10v4h4" stroke="#9aa0a8" />
    <path d="M0 0h6v3H0zM7 4h6v4H7zM13 10h7v4h-7zM6 16h6v4H6z" fill="#5c93bf" stroke="none" />
  </Svg>
);

const CubeIcon = () => (
  <Svg>
    <path d="M1 4l4-3h14l-3 4v13H1z" fill="#5f9cca" stroke="none" />
    <path d="M1 4l4-3h14l-3 4z" fill="#86b7da" stroke="none" />
    <path d="M16 5l3-4v12l-3 5z" fill="#3f759e" stroke="none" />
  </Svg>
);

const PlaneIcon = () => (
  <Svg>
    <path d="M5 1h14v14H5z" fill="#5f656e" stroke="#989da3" />
    <path d="M1 5h14v14H1z" fill="#5b656d" fillOpacity={0.700} stroke="#989da3" />
    <path d="M5 5h10v10H5z" fill="#6c6e7c" stroke="#7d8290" strokeWidth={1} />
  </Svg>
);

const AxisIcon = () => (
  <Svg>
    <path d="M3.500 1h16v14h-16z" fill="#666973" stroke="#7f848c" />
    <path d="M1 19L12 8" stroke="#363c47" strokeWidth={4} />
    <path d="M0 19L12 7" stroke="#a0a5ab" strokeWidth={1.600} />
  </Svg>
);

const CenterIcon = () => (
  <Svg>
    <path d="M9 4l5.500 5.500L9 15 3.500 9.500zM9 0v5M9 14v5M0 9.500h4M14 9.500h4" stroke="#959a9f" strokeWidth={2} />
  </Svg>
);

const ExtrusionIcon = () => (
  <Svg>
    <path d="M0 3l3-2h12v12l-3 4H0z" fill="#5f9cca" stroke="none" />
    <path d="M12 4l3-3v12l-3 4z" fill="#3f759e" stroke="none" />
    <path d="M0 19h12l4-4" stroke="#a0a5ab" strokeWidth={2} />
    <path d="M18 3v13M16 4l2-3 2 3" stroke="#a0a5ab" />
  </Svg>
);

const SketchNodeIcon = () => (
  <Svg>
    <path d="M2.500 2.500h14v14h-14z" stroke={B} />
    <Dot x={2} y={2} />
    <Dot x={17} y={2} />
    <Dot x={2} y={17} />
    <Dot x={17} y={17} />
  </Svg>
);

const EndIcon = () => (
  <Svg>
    <path d="M6 1h7l5 5v7l-5 5H6l-5-5V6z" fill="#b64b50" stroke="none" />
    <path d="M6 6l7 7M13 6l-7 7" stroke="#c9ccd0" strokeWidth={2.600} />
  </Svg>
);

interface TreeItem {
  label: string;
  icon: React.ReactNode;
  level: number;
  toggle?: 'plus' | 'minus';
  last?: boolean;
  selected?: boolean;
}

const tree: TreeItem[] = [
  { label: 'Straight-Four Engine Head', icon: <CubeIcon />, level: 0 },
  { label: 'Model States: Master', icon: <FolderIcon />, level: 1, toggle: 'plus' },
  { label: 'Solid Bodies(1)', icon: <FolderIcon body />, level: 1, toggle: 'plus' },
  { label: 'View: Master', icon: <ViewTreeIcon />, level: 1, toggle: 'plus' },
  { label: 'Origin', icon: <OpenFolderIcon />, level: 1, toggle: 'minus' },
  { label: 'YZ Plane', icon: <PlaneIcon />, level: 2 },
  { label: 'XZ Plane', icon: <PlaneIcon />, level: 2 },
  { label: 'XY Plane', icon: <PlaneIcon />, level: 2 },
  { label: 'X Axis', icon: <AxisIcon />, level: 2 },
  { label: 'Y Axis', icon: <AxisIcon />, level: 2 },
  { label: 'Z Axis', icon: <AxisIcon />, level: 2 },
  { label: 'Center Point', icon: <CenterIcon />, level: 2, last: true },
  { label: 'Extrusion1', icon: <ExtrusionIcon />, level: 1, toggle: 'plus' },
  { label: 'Sketch2', icon: <SketchNodeIcon />, level: 1, selected: true },
  { label: 'End of Part', icon: <EndIcon />, level: 1, last: true },
];

const Guide = ({ item }: { item: TreeItem }) => {
  const w = item.level === 2 ? 42 : 22;
  return (
    <svg width={w} height={25} className="shrink-0" fill="none" stroke="#7b828c" strokeDasharray="1 1" aria-hidden="true">
      <path d={item.last && item.level === 1 ? 'M9.500 0v14' : 'M9.500 0v25'} />
      {item.level === 1 && <path d="M10 14.500h11" />}
      {item.level === 2 && <path d={item.last ? 'M29.500 0v14M30 14.500h10' : 'M29.500 0v25M30 14.500h10'} />}
      {item.toggle && (
        <g strokeDasharray="none">
          <rect x="2" y="6" width="14" height="14" fill="#3b4453" stroke="none" />
          <path d={item.toggle === 'plus' ? 'M4 13h10M9 8v10' : 'M4 13h10'} stroke="#9aa0a8" strokeWidth={2} />
        </g>
      )}
    </svg>
  );
};

const ModelBrowser = () => (
  <aside className="flex w-[231px] shrink-0 flex-col border-r border-[#222933] bg-[#3b4453] font-['Noto_Sans','Open_Sans',sans-serif] text-xs">
    <div className="flex h-6 items-center bg-[#222933]">
      <div className="flex h-full w-[63px] items-center bg-[#3b4453] pl-[3px] text-white">
        <span>Model</span>
        <button aria-label="Close Model" className="ml-2">
          <Svg w={10} h={10}><path d="M1 1l8 8M9 1L1 9" strokeWidth={1.800} /></Svg>
        </button>
      </div>
      <button aria-label="Add panel" className="ml-[7px]">
        <Svg w={10} h={10}><path d="M5 0v10M0 5h10" stroke="#8d929b" strokeWidth={1.800} /></Svg>
      </button>
      <div className="flex-1" />
      <button aria-label="Search">
        <Svg w={15} h={15}>
          <circle cx="6" cy="6" r="5" stroke="#8d929b" />
          <path d="M10 10l4 4" stroke="#8d929b" strokeWidth={1.800} />
        </Svg>
      </button>
      <button aria-label="Browser menu" className="ml-2.5 mr-1.5">
        <Svg w={14} h={12}><path d="M0 1h14M0 6h14M0 11h14" strokeWidth={2} /></Svg>
      </button>
    </div>
    <ul className="bg-[#323946] text-[#a3a8ae]">
      {tree.map((item) => (
        <li key={item.label} className={`flex h-[25px] items-center ${item.selected ? 'bg-[#3b4453] text-white' : ''}`}>
          {item.level > 0 ? <Guide item={item} /> : <span className="w-0.5" />}
          {item.icon}
          <span className="ml-[3px] whitespace-nowrap pt-0.5">{item.label}</span>
        </li>
      ))}
    </ul>
  </aside>
);

/* ---------- canvas ---------- */

const NavBar = () => (
  <div className="absolute right-0 top-[145px] flex h-[231px] w-[34px] flex-col items-center rounded-md border-2 border-[#2b303a]/40 bg-[#d6d8dc]/40">
    <button aria-label="Close navigation bar" className="mr-0.5 mt-0.5 self-end">
      <Svg w={10} h={10}>
        <circle cx="5" cy="5" r="4.500" fill="#3d424c" stroke="none" />
        <path d="M3 3l4 4M7 3L3 7" strokeWidth={1.300} />
      </Svg>
    </button>
    <button aria-label="Full navigation wheel" className="mt-2">
      <Svg w={22} h={22}>
        <path d="M11 1h9v10a9.500 9.500 0 1 1-9-10z" fill="#b6b9bf" stroke="#5a5f68" strokeWidth={1} />
        <circle cx="11" cy="11" r="6" fill="#a8abb1" stroke="#5a5f68" strokeWidth={1} />
        <path d="M4 18l3-3M18 18l-3-3" stroke="#5a5f68" strokeWidth={1} />
      </Svg>
    </button>
    <span className="mt-2"><Caret color="#3f444e" w={6} /></span>
    <div className="mt-1 h-px w-[26px] bg-[#454a54]" />
    <button aria-label="Pan" className="mt-[7px]">
      <Svg w={24} h={24}>
        <path d="M8 23C6 18 4 15 1 12c1-2 4 0 6 2L5 4c1-2 3-1 3 1l2 6 0-9c1-2 3-2 3 0l1 9 2-8c1-2 3-1 2 1l-1 8 3-5c1-1 3 0 2 2-2 4-2 10-5 14z" fill="#d5d7da" stroke="#70757d" strokeWidth={1} />
      </Svg>
    </button>
    <button aria-label="Zoom" className="mt-[7px]">
      <Svg w={24} h={24}>
        <path d="M1.500 1.500h10l4 4V20h-14z" fill="#dfe0e1" stroke="#85888c" strokeWidth={1} />
        <path d="M11.500 1.500v4h4" stroke="#85888c" strokeWidth={1} />
        <path d="M18 18l5 5" stroke="#7c7f83" strokeWidth={3} />
        <circle cx="14.500" cy="15.500" r="5" fill="#d5d7d9" stroke="#7c7f83" strokeWidth={1.400} />
      </Svg>
    </button>
    <span className="mt-2"><Caret color="#74777b" w={6} /></span>
    <button aria-label="Orbit" className="mt-[7px]">
      <Svg w={24} h={24}>
        <ellipse cx="11" cy="12" rx="10.500" ry="4.500" stroke="#83868a" />
        <ellipse cx="11" cy="12" rx="4" ry="10.500" stroke="#83868a" />
        <path d="M8 12h6M11 9v6M13 4l5 3M16 9l5-3M14 7h4V3" stroke="#6f7276" />
      </Svg>
    </button>
    <span className="mt-2"><Caret color="#74777b" w={6} /></span>
    <button aria-label="Look at" className="mt-[7px]">
      <Svg w={24} h={24}>
        <path d="M1 7l7-6v4l8-3v5" fill="#d5d7d9" stroke="#83868a" strokeWidth={1} />
        <path d="M1 7h22v15H1z" fill="#d5d7d9" stroke="#83868a" strokeWidth={1} />
        <path d="M5 11h14v7H5z" fill="#adb0b6" stroke="#7a7d82" strokeWidth={1} />
      </Svg>
    </button>
    <button aria-label="Customize navigation bar" className="mr-0.5 mt-2.5 self-end">
      <Svg w={10} h={10}>
        <circle cx="5" cy="5" r="4" stroke="#8a8c8f" />
        <path d="M3 4h4M3 6h4" stroke="#8a8c8f" strokeWidth={1} />
      </Svg>
    </button>
  </div>
);

const Canvas = () => (
  <main className="relative flex-1 overflow-hidden bg-[radial-gradient(ellipse_at_50%_55%,#3c4452_0%,#373f4d_35%,#242b35_95%)]">
    <svg className="absolute inset-0 h-full w-full" fill="none" aria-hidden="true">
      <path d="M278 229V737A107 107 0 0 0 385 844H4000V229H1332A327 327 0 0 1 677.500 229z" fill="#abaaa6" />
      <path d="M0 228.500H4000" stroke="#b4c0ce" />
      <path d="M278 0V2000" stroke="#b4c0ce" strokeWidth={2} />
      <path d="M247 229V736A138 138 0 0 0 385 874" stroke="#fff" strokeWidth={2} />
      <path d="M278 229V737A107 107 0 0 0 385 844" stroke="#ecec00" strokeWidth={2} />
      <path d="M247 229h31" stroke="#fff" strokeWidth={2} />
      <path d="M278 229h399" stroke="#12a52e" strokeWidth={2} />
      <rect x="676" y="226" width="3" height="3" fill="#000" />
      <rect x="243" y="225" width="8" height="8" fill="#ffc400" stroke="#5a5647" strokeWidth={2} />
      <rect x="274" y="225" width="8" height="8" fill="#ffc400" stroke="#5a5647" strokeWidth={2} />
      <path d="M276 226h3v3h-3zM279 229h4v1h-4z" fill="#12321a" />
      <circle cx="503.500" cy="169.500" r="3" fill="#ffff00" stroke="#000" />
      <rect x="383" y="734" width="4" height="4" fill="#ecec00" />
      {/* vertical constraint glyph */}
      <path d="M261.500 204v16M265.500 204v16M261 205l-4 4M261 210l-4 4M261 215l-4 4" stroke="#fff" />
      {/* axis triad */}
      <path d="M53 759l4 9h-8z" fill="#b80000" />
      <path d="M22 788l10-5v11z" fill="#0000a8" />
      <circle cx="53" cy="788" r="5.500" fill="#0a8a0a" />
      <path d="M53 788v-21" stroke="#b80000" strokeWidth={1.500} />
      <path d="M53 788H32" stroke="#0000b8" strokeWidth={1.500} />
      <text x="49" y="757" fill="#c81414" fontSize="12" fontFamily="Liberation Sans">X</text>
      <text x="12" y="793" fill="#1414dc" fontSize="13" fontFamily="Liberation Sans">Z</text>
    </svg>

    <div className="absolute right-0.5 top-1.5 flex items-center gap-3">
      <button aria-label="Minimize view"><Svg w={9} h={11}><path d="M0 10h9" stroke="#dfe8f2" strokeWidth={2} /></Svg></button>
      <button aria-label="Tile views">
        <Svg w={12} h={11}><path d="M1 1h10v9H1zM6.500 1v9M6.500 5.500h4.500" stroke="#dfe8f2" /></Svg>
      </button>
      <button aria-label="Close view" className="-ml-1"><Svg w={10} h={11}><path d="M0.500 1l9 9M9.500 1l-9 9" stroke="#dfe8f2" strokeWidth={1.800} /></Svg></button>
    </div>

    <button className="absolute right-[34px] top-[59px] flex h-[54px] w-[54px] items-center justify-center border border-[#757880] bg-[#6a6d74] font-['Liberation_Sans',sans-serif] text-xs font-bold text-[#484d59]">
      <span className="flex h-[34px] w-[34px] items-center justify-center bg-[#5f636d] [writing-mode:vertical-rl]">BOTTOM</span>
    </button>

    <div className="absolute left-[533px] top-[200px] flex h-6 border border-black bg-black text-sm leading-[22px] text-[#1d1d1d]">
      <label htmlFor="pos-x" className="w-[18px] bg-[#dcdcdc] text-center">X</label>
      <input id="pos-x" defaultValue="7,551 mm" className="ml-px w-[74px] bg-white pl-1" />
      <label htmlFor="pos-y" className="ml-px w-[17px] bg-[#dcdcdc] text-center">Y</label>
      <input id="pos-y" defaultValue="-29,343 mm" className="ml-px w-[87px] bg-white pl-1" />
    </div>

    <NavBar />
  </main>
);

const DocumentTabs = () => (
  <div className="flex h-[30px] bg-[#222933] text-sm">
    <button aria-label="Home tab" className="flex w-[34px] items-center justify-center bg-[#434c5c]">
      <HomeIcon />
    </button>
    <div className="flex items-center border-b-4 border-[#35a9e0] bg-[#3b4453] px-2.5 text-[#f0f1f3]">
      <span>Straight-Four Engine Head.ipt</span>
      <button aria-label="Close document" className="ml-2.5">
        <Svg w={12} h={12}><path d="M1 1l10 10M11 1L1 11" stroke="#8d929b" strokeWidth={1.800} /></Svg>
      </button>
    </div>
    <button aria-label="Document list" className="ml-auto mr-[5px]">
      <Svg w={18} h={16}><path d="M0 2h18M0 8h18M0 14h18" stroke="#a9b3c3" strokeWidth={2} /></Svg>
    </button>
  </div>
);

/* ---------- status bar ---------- */

const StatusBar = () => (
  <footer className="flex h-[29px] items-center bg-[#2d333f] pt-0.5 text-sm text-[#e6e8eb]">
    <p className="w-[448px]">Select start of line, drag off endpoint for tangent arc</p>
    <div className="h-full w-px bg-[#d5d7da]" />
    <div className="ml-1.5 flex items-center gap-2.5">
      <button aria-label="Snap to grid">
        <Svg>
          <path d="M1 1h14v14H1zM1 5.500h14M1 10h14M5.500 1v14M10 1v14" strokeWidth={1.300} />
          <path d="M10 10h11v11H10z" fill="#2d333f" stroke="none" />
          <path d="M12 20v-4c0-4 6-4 6 0v4" stroke="#f28a86" strokeWidth={3} />
        </Svg>
      </button>
      <button aria-label="Show all constraints">
        <Svg>
          <path d="M5 1H1.500v17H5M13 1h4v5" />
          <path d="M4 6l6 7" stroke={R} strokeWidth={2} />
          <path d="M8 9l5-5" />
          <circle cx="15.500" cy="12" r="4.500" fill="#56d2de" stroke="none" />
          <path d="M14 17h3v3h-3z" fill={L} stroke="none" />
        </Svg>
      </button>
      <button aria-label="Dimension display" className="flex items-center gap-1.5">
        <Svg>
          <path d="M1 10v10M19 10v10M3 15h14M2 3h5M4.500 0.500v5M8 6l3-6M12 3h5" />
          <path d="M1 15l4-2v4zM19 15l-4-2v4z" fill={L} stroke="none" />
        </Svg>
        <Caret />
      </button>
      <button aria-label="Slice graphics">
        <Svg>
          <path d="M0 11l4-4h7v12H0z" fill={L} stroke="none" />
          <path d="M11 7l8-6v13l-8 6z" fill="#3f86bd" stroke={B} />
        </Svg>
      </button>
      <button aria-label="Show degrees of freedom">
        <Svg>
          <path d="M7 1v12M1 7h12" />
          <path d="M7 0l2.500 3h-5zM7 14l2.500-3h-5zM0 7l3-2.500v5zM14 7l-3-2.500v5z" fill={L} stroke="none" />
          <circle cx="15" cy="12" r="4.500" fill={Y} stroke="none" />
          <path d="M13.500 17h3v3h-3z" fill={L} stroke="none" />
        </Svg>
      </button>
      <button aria-label="Relax mode">
        <Svg>
          <path d="M13 1v12M7 7h12" />
          <path d="M13 0l2.500 3h-5zM13 14l2.500-3h-5zM6 7l3-2.500v5zM20 7l-3-2.500v5z" fill={L} stroke="none" />
          <path d="M2 5l14 14" stroke={R} />
          <Dot x={2} y={5} c={R} />
          <Dot x={16} y={18} c={R} />
        </Svg>
      </button>
    </div>
    <div className="ml-auto flex h-full items-center whitespace-nowrap">
      <span className="flex h-full w-[161px] items-center border-l border-[#d5d7da] pl-1">30,299 mm, 284,43 deg</span>
      <span className="flex h-full w-[38px] items-center border-l border-[#d5d7da] pl-2">1</span>
      <span className="flex h-full w-[38px] items-center border-l border-[#d5d7da] pl-2">1</span>
    </div>
  </footer>
);

const App: React.FC = () => (
  <div className="flex min-h-screen flex-col border-r border-[#cfd3d8] bg-[#222933] font-['Open_Sans','Noto_Sans',sans-serif]">
    <TitleBar />
    <TabRow />
    <Ribbon />
    <div className="flex flex-1 pt-px">
      <ModelBrowser />
      <div className="flex min-w-0 flex-1 flex-col">
        <Canvas />
        <DocumentTabs />
      </div>
    </div>
    <StatusBar />
  </div>
);

export default App;
